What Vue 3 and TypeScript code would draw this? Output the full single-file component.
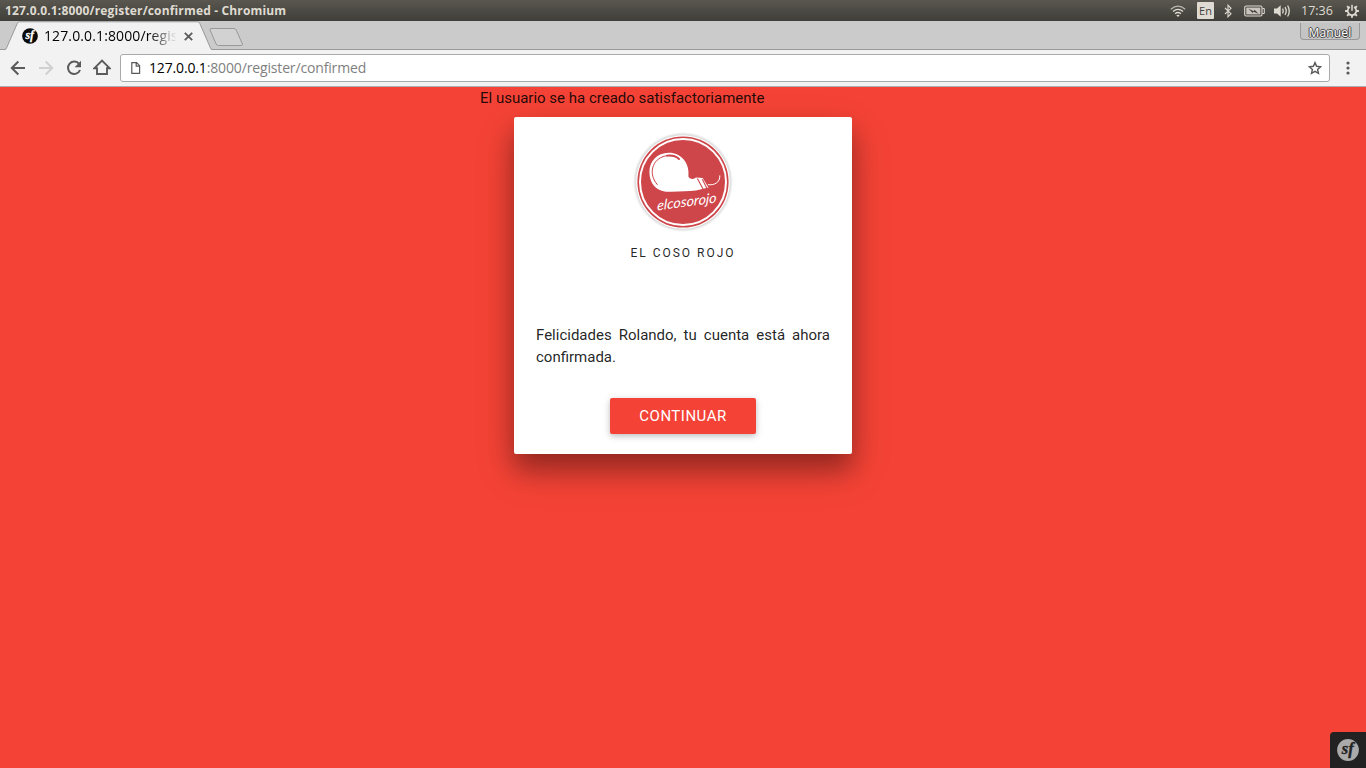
<script setup lang="ts">
const host = '127.0.0.1'
const path = ':8000/register/confirmed'
const tabTitle = '127.0.0.1:8000/regis'
</script>

<template>
  <div class="screen">
    <header class="menubar">
      <span class="window-title">{{ host }}{{ path }} - Chromium</span>
      <div class="tray">
        <svg class="wifi" width="16" height="14" viewBox="0 0 16 14" fill="none" stroke="#dfdbd2" stroke-width="1.3">
          <path d="M.8 5.3Q8-1 15.2 5.3" opacity=".75" />
          <path d="M3 7.6Q8 3.2 13 7.6" />
          <path d="M5.1 9.8Q8 7.2 10.9 9.8" />
          <path d="M6.3 11.3Q8 10 9.7 11.3L8 13z" fill="#dfdbd2" stroke="none" />
        </svg>
        <span class="lang">En</span>
        <svg class="bt" width="8" height="14" viewBox="0 0 8 14" fill="none" stroke="#dfdbd2" stroke-width="1.1">
          <path d="M1 4l6 5.7L4 12.8V1.2l3 3.1L1 10" />
        </svg>
        <svg class="battery" width="21" height="12" viewBox="0 0 21 12">
          <rect x=".7" y="1" width="17.3" height="10" rx="1.5" fill="none" stroke="#dfdbd2" stroke-width="1.1" />
          <path d="M18.5 3.5h1.8v5h-1.8" fill="none" stroke="#dfdbd2" />
          <path d="M2.3 2.6h14v6.8h-14z" fill="#c9c5bd" />
          <path d="M4.5 3.8L9.8 6.2l.6-1.5 4.3 4-5.2-2-.8 1.4z" fill="#3f3e39" />
        </svg>
        <svg class="sound" width="17" height="14" viewBox="0 0 17 14" fill="none" stroke="#dfdbd2" stroke-width="1.3">
          <path d="M0 4.5h3L6.7 1.3v11.4L3 9.5H0z" fill="#dfdbd2" stroke="none" />
          <path d="M8.5 4.7q1.4 2.3 0 4.6M11 3.1q2.5 3.9 0 7.8M13.6 1.5q3.3 5.5 0 11" />
        </svg>
        <span class="clock">17:36</span>
        <svg class="gear" width="14" height="14" viewBox="0 0 14 14" fill="none" stroke="#dfdbd2">
          <path d="M4.9 3.1a4.3 4.3 0 1 0 4.2 0" stroke-width="1.7" />
          <path d="M7 .8v6" stroke-width="1.5" />
          <path d="M.1 7h2.5M11.4 7h2.5M2.1 2.1l1.8 1.8M11.9 2.1l-1.8 1.8M2.1 11.9l1.8-1.8M11.9 11.9l-1.8-1.8M7 11.2v2.5" stroke-width="1.9" />
        </svg>
      </div>
    </header>

    <div class="tabstrip">
      <svg class="tab-shapes" width="260" height="29" viewBox="0 0 260 29">
        <path d="M5.5 29L17.4 2.2Q18.2.8 19.5.8H197.5Q199 .8 199.7 2.2L211.5 29z" fill="#f2f2f2" />
        <path d="M0 28.5H5.2Q6 28.3 6.5 27L17.4 2.2Q18.2.8 19.5.8H197.5Q199 .8 199.7 2.2L210.5 27Q211 28.5 212 28.5H260" fill="none" stroke="#999" />
        <path d="M211 7.5h23q1.5 0 2.2 1.5l6.2 14q.5 1.5-1 1.5h-23q-1.7 0-2.3-1.5l-6-14q-.5-1.5.9-1.5z" fill="#d2d2d2" stroke="#999" />
      </svg>
      <div class="tab">
        <svg width="16" height="16" viewBox="0 0 36 36">
          <circle cx="18" cy="18" r="17.7" fill="#0a0a0a" />
          <text class="sf" x="17.5" y="25" text-anchor="middle" fill="#fff" stroke="#fff">sf</text>
        </svg>
        <span class="tab-title">{{ tabTitle }}</span>
        <svg class="close" width="9" height="9" viewBox="0 0 9 9" stroke="#5a5a5a" stroke-width="1.8">
          <path d="M.8.8l7.4 7.4M8.2.8L.8 8.2" />
        </svg>
      </div>
      <span class="profile">Manuel</span>
    </div>

    <nav class="toolbar">
      <svg class="back" width="16" height="16" viewBox="0 0 16 16" fill="none" stroke="#5a5a5a" stroke-width="2">
        <path d="M15 8H2M8.3 1.5L1.8 8l6.5 6.5" />
      </svg>
      <svg class="forward" width="16" height="16" viewBox="0 0 16 16" fill="none" stroke="#d0d0d0" stroke-width="2">
        <path d="M1 8h13M7.7 1.5L14.2 8l-6.5 6.5" />
      </svg>
      <svg class="reload" width="16" height="16" viewBox="0 0 16 16">
        <path d="M13.2 4.1A6.2 6.2 0 1 0 14 10" fill="none" stroke="#5a5a5a" stroke-width="2" />
        <path d="M15 .8v6.4H8.6z" fill="#5a5a5a" />
      </svg>
      <svg class="home" width="18" height="17" viewBox="0 0 18 17" fill="none" stroke="#5a5a5a" stroke-width="1.9">
        <path d="M1.5 9.2L9 1.6l7.5 7.6H14V15H4V9.2z" />
      </svg>
      <div class="omnibox">
        <svg class="page-icon" width="10" height="12" viewBox="0 0 10 12" fill="none" stroke="#5a5a5a" stroke-width="1.2">
          <path d="M.8.7h4.8l3 3v7.6H.8zM5.2.7v3.5h3.4" />
        </svg>
        <span class="url"><b>{{ host }}</b>{{ path }}</span>
        <svg class="star" width="14" height="14" viewBox="0 0 14 14" fill="none" stroke="#5a5a5a" stroke-width="1.4">
          <path d="M7 1.6l1.6 3.7 4 .4-3 2.7.9 4L7 10.3l-3.5 2.1.9-4-3-2.7 4-.4z" />
        </svg>
      </div>
      <svg class="dots" width="4" height="14" viewBox="0 0 4 14" fill="#5a5a5a">
        <circle cx="2" cy="2" r="1.6" /><circle cx="2" cy="7" r="1.6" /><circle cx="2" cy="12" r="1.6" />
      </svg>
    </nav>

    <main class="page">
      <div class="content">
        <p class="flash">El usuario se ha creado satisfactoriamente</p>
        <section class="card">
          <svg class="logo" width="100" height="100" viewBox="0 0 100 100">
            <defs>
              <radialGradient id="halo">
                <stop offset=".93" stop-color="#d5d5d5" />
                <stop offset="1" stop-color="#fff" />
              </radialGradient>
            </defs>
            <circle cx="50" cy="50" r="50" fill="url(#halo)" />
            <circle cx="50" cy="50" r="46.8" fill="#fff" />
            <circle cx="50" cy="50" r="45.6" fill="#ce454a" />
            <circle cx="50" cy="50" r="43" fill="none" stroke="#fff" stroke-width="2" />
            <path d="M35.8 20.8C24 20.8 16.4 29.5 16.4 40C16.4 51 23 59 33 59.7C45 60 54 59.3 63 58.6L75.4 55.6L69.7 46L63 45.6L61.5 46.6C58.5 47.6 56 46 55.4 44.5C57 31 48 20.8 35.8 20.8z" fill="#fff" />
            <path d="M24.2 52.5C13.5 40 21 24.5 35 23.6C40 23.4 43.5 24.5 46 27" fill="none" stroke="#ce454a" stroke-width="1" stroke-linecap="round" />
            <path d="M34 23.6C39.5 23 43.5 24.3 46 27" fill="none" stroke="#ce454a" stroke-width="1.9" stroke-linecap="round" />
            <path d="M64.4 46.6L70 56.9M69.3 47.3L73.7 55.9" fill="none" stroke="#ce454a" stroke-width="1.1" />
            <path d="M75 52.6C80.5 53.6 87.4 50.8 86.8 43.4" fill="none" stroke="#fff" stroke-width="1" />
            <text class="wordmark" transform="translate(24 78.4) rotate(-7.5) skewX(-10)" textLength="60" lengthAdjust="spacingAndGlyphs" fill="#fff">elcosorojo</text>
          </svg>
          <h1 class="brand">EL COSO ROJO</h1>
          <p class="message">Felicidades Rolando, tu cuenta está ahora confirmada.</p>
          <button class="continue" type="button">CONTINUAR</button>
        </section>
      </div>
      <div class="debug-toggle">
        <svg width="22" height="22" viewBox="0 0 36 36">
          <circle cx="18" cy="18" r="17.8" fill="#aaa" />
          <text class="sf" x="17.5" y="25" text-anchor="middle" fill="#222" stroke="#222">sf</text>
        </svg>
      </div>
    </main>
  </div>
</template>

<style>
body { margin: 0; overflow: hidden; }
</style>

<style scoped>
.screen { width: 1366px; height: 768px; display: flex; flex-direction: column; font-family: "Open Sans", "Noto Sans", sans-serif; overflow: hidden; }
.screen * { box-sizing: border-box; }
svg { display: block; flex: none; }
.sf { font: italic 700 27px "Liberation Serif", serif; stroke-width: .6px; }
.wordmark { font: italic 400 14px Lato, sans-serif; }
.menubar { height: 21px; flex: none; display: flex; align-items: center; justify-content: space-between; padding: 0 7px 0 5px; background: linear-gradient(#59574f, #3f3e39); color: #dfdbd2; }
.window-title { font-size: 12px; font-weight: 700; white-space: nowrap; letter-spacing: .16px; line-height: 20px; }
.tray { display: flex; align-items: center; height: 21px; }
.lang { margin-left: 11px; width: 17px; height: 17px; background: #dfdbd2; color: #45433e; font-size: 11px; line-height: 17px; text-align: center; border-radius: 1px; }
.bt { margin-left: 10px; }
.battery { margin-left: 12px; }
.sound { margin-left: 9px; }
.clock { margin-left: 10px; width: 33px; font-size: 12.5px; line-height: 20px; white-space: nowrap; }
.gear { margin-left: 11px; }
.tabstrip { position: relative; height: 29px; flex: none; display: flex; justify-content: space-between; background: #cbcbcb; border-bottom: 1px solid #999; }
.tab-shapes { position: absolute; left: 0; top: 0; }
.tab { position: relative; display: flex; align-items: center; height: 29px; padding: 1px 0 0 22px; }
.tab-title { margin-left: 6px; width: 132px; white-space: nowrap; font-size: 14px; letter-spacing: .12px; line-height: 20px; color: #000; -webkit-mask-image: linear-gradient(90deg, #000 105px, transparent 133px); mask-image: linear-gradient(90deg, #000 105px, transparent 133px); }
.close { margin-left: 8px; }
.profile { margin: 2px 6px 0 0; width: 60px; height: 17px; border: 1px solid #999; border-top: 0; border-radius: 0 0 4px 4px; background: #c4c4c4; color: #fff; font-size: 12px; letter-spacing: .15px; line-height: 19px; text-align: center; text-shadow: -1px 0 #444, 1px 0 #444, 0 -1px #444, 0 1px #444; }
.toolbar { height: 37px; flex: none; display: flex; align-items: center; padding: 0 16px 1px 10px; background: #f2f2f2; border-bottom: 1px solid #adadad; }
.forward, .reload { margin-left: 12px; }
.home { margin-left: 11px; }
.omnibox { flex: 1; height: 28px; margin-left: 9px; padding: 0 7px 0 10px; display: flex; align-items: center; background: #fff; border: 1px solid #a9a9a9; border-radius: 3px; }
.url { margin-left: 8px; flex: 1; font-size: 14px; letter-spacing: -.15px; line-height: 24px; color: #808080; white-space: nowrap; }
.url b { font-weight: 400; color: #000; }
.dots { margin-left: 16px; }
.page { position: relative; flex: 1; background: #f44336; font-family: Roboto, sans-serif; font-size: 15px; line-height: 22.5px; color: rgba(0, 0, 0, .87); }
.content { width: 406px; margin: 0 auto; }
.flash { margin: 0; }
.card { width: 338px; height: 337px; margin: 7.5px auto 0; padding: 15px 22px 20px; display: flex; flex-direction: column; align-items: center; background: #fff; border-radius: 2px; box-shadow: 0 15px 24px rgba(0, 0, 0, .28), 0 17px 42px rgba(0, 0, 0, .18); }
.brand { margin: 12px 0 0; font-size: 12px; font-weight: 400; line-height: 18px; letter-spacing: 2px; }
.message { margin: 62px 0 0; width: 294px; line-height: 22px; text-align: justify; }
.continue { margin-top: auto; width: 146px; height: 36px; padding: 0; border: 0; border-radius: 2px; background: #f44336; color: #fff; font: 15px/36px Roboto, sans-serif; letter-spacing: .5px; text-align: center; box-shadow: 0 2px 5px 0 rgba(0, 0, 0, .16), 0 2px 10px 0 rgba(0, 0, 0, .12); }
.debug-toggle { position: absolute; right: 0; bottom: 0; width: 36px; height: 36px; display: flex; align-items: center; justify-content: center; background: #222; border-radius: 4px 0 0 0; }
</style>
